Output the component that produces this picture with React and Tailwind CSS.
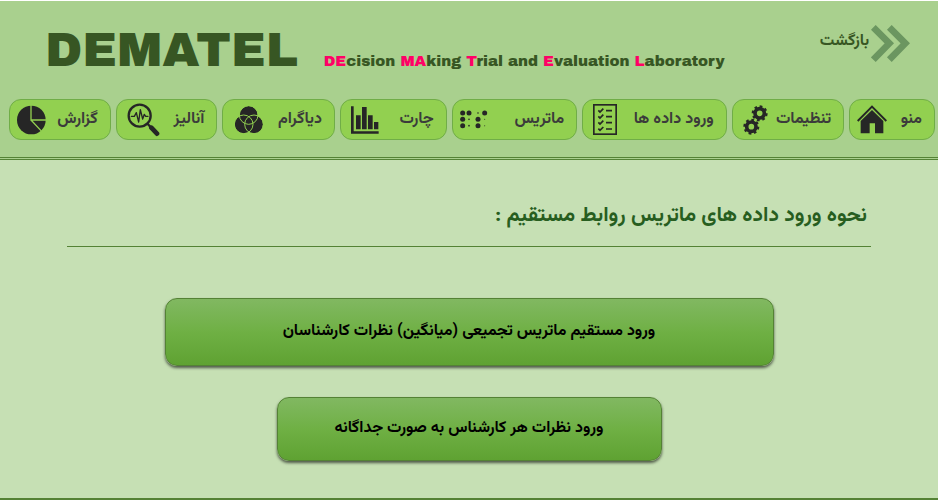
/* eslint-disable react/prop-types */
const HomeIcon = () => (
  <svg viewBox="0 0 90 87" className="w-[30px] h-[29px] shrink-0" fill="#262626">
    <path d="M2 48 L45 5 L88 48" fill="none" stroke="#262626" strokeWidth="6" />
    <path d="M11 48 L45 15 L79 48 V85 H54 V55 H38 V85 H11 Z" />
  </svg>
);

const Gear = ({ x, y }) => (
  <g fill="none" stroke="#262626">
    <circle cx={x} cy={y} r="14" strokeWidth="11" />
    <circle
      cx={x}
      cy={y}
      r="20"
      strokeWidth="8"
      pathLength="16"
      strokeDasharray="1 1"
    />
  </g>
);

const GearsIcon = () => (
  <svg viewBox="0 0 75 90" className="w-[25px] h-[30px] shrink-0">
    <Gear x={50} y={25} />
    <Gear x={25} y={65} />
  </svg>
);

const ListIcon = () => (
  <svg
    viewBox="0 0 72 93"
    className="w-[24px] h-[31px] shrink-0"
    fill="none"
    stroke="#262626"
    strokeWidth="5"
  >
    <rect x="2.5" y="2.5" width="67" height="88" strokeWidth="5" />
    {[20, 38, 56, 75].map((y) => (
      <path
        key={y}
        d={`M16 ${y - 1} l5 5 l10 -10 M39 ${y} h18`}
      />
    ))}
  </svg>
);

const dots = [
  [8, 9, 7.5],
  [27, 9, 7.5],
  [54, 9, 2.5],
  [74, 9, 7.5],
  [8, 28, 7.5],
  [27, 28, 2.5],
  [54, 28, 7.5],
  [74, 28, 1.5],
  [8, 47, 7.5],
  [27, 47, 2.5],
  [54, 47, 7.5],
  [74, 47, 1.5],
];

const MatrixIcon = () => (
  <svg viewBox="0 0 84 57" className="w-[28px] h-[19px] shrink-0" fill="#262626">
    {dots.map(([x, y, r]) => (
      <circle key={`${x}-${y}`} cx={x} cy={y} r={r} />
    ))}
  </svg>
);

const ChartIcon = () => (
  <svg viewBox="0 0 84 84" className="w-[28px] h-[28px] shrink-0" fill="#262626">
    <path d="M0 1 H8 V76 H83 V83 H0 Z" />
    <path d="M15 28 h14 v42 h-14 Z M33 3 h14 v67 h-14 Z M51 28 h14 v42 h-14 Z M69 48 h13 v22 h-13 Z" />
  </svg>
);

const VennIcon = () => (
  <svg viewBox="0 -3 84 87" className="w-[28px] h-[29px] shrink-0">
    <g fill="#262626">
      <circle cx="41" cy="27" r="27" />
      <circle cx="26" cy="55" r="27" />
      <circle cx="57" cy="55" r="27" />
    </g>
    <g fill="none" stroke="#92d050" strokeWidth="3">
      <circle cx="41" cy="27" r="28" />
      <circle cx="26" cy="55" r="28" />
      <circle cx="57" cy="55" r="28" />
    </g>
  </svg>
);

const AnalyzeIcon = () => (
  <svg
    viewBox="0 0 99 102"
    className="w-[33px] h-[34px] shrink-0"
    fill="none"
    stroke="#262626"
    strokeLinecap="round"
    strokeLinejoin="round"
  >
    <circle cx="38" cy="38" r="33" strokeWidth="7" />
    <path
      d="M13 40 H22 L28 29 L35 57 L40 20 L47 48 L52 34 L56 40 H63"
      strokeWidth="4"
    />
    <path d="M62 63 L72 73" strokeWidth="7" />
    <path d="M73 74 L90 92" strokeWidth="14" />
  </svg>
);

const PieIcon = () => (
  <svg viewBox="0 0 87 90" className="w-[29px] h-[30px] shrink-0">
    <circle cx="43" cy="45" r="43" fill="#262626" />
    <path
      d="M42 0 V45 H87 M42 45 L74 79"
      fill="none"
      stroke="#92d050"
      strokeWidth="4"
    />
  </svg>
);

const menu = [
  { name: "منو", Icon: HomeIcon, pad: "pl-[7px]" },
  { name: "تنظیمات", Icon: GearsIcon, pad: "pl-[10px]" },
  { name: "ورود داده ها", Icon: ListIcon, pad: "pl-[10px]" },
  { name: "ماتریس", Icon: MatrixIcon, pad: "pl-[7px]" },
  { name: "چارت", Icon: ChartIcon, pad: "pl-[10px]" },
  { name: "دیاگرام", Icon: VennIcon, pad: "pl-[12px]" },
  { name: "آنالیز", Icon: AnalyzeIcon, pad: "pl-[10px]" },
  { name: "گزارش", Icon: PieIcon, pad: "pl-[7px]" },
];

const Pink = ({ children }) => (
  <span className="text-[#ff0066]">{children}</span>
);

const Header = () => {
  return (
    <header className="bg-[#a9d08e] border-b-3 border-double border-[#548235] pb-[17px]">
      <div className="flex items-start justify-between pt-5 pr-7 pl-[45px]">
        <button className="flex items-center gap-[2px] text-base font-bold text-[#375623]">
          <svg
            viewBox="0 0 117 111"
            className="w-[39px] h-[37px] mt-1"
            fill="none"
            stroke="#6b9660"
            strokeWidth="20"
          >
            <path d="M7 7 L55 55 L7 104 M55 7 L103 55 L55 104" />
          </svg>
          بازگشت
        </button>
        <div
          dir="ltr"
          className="flex items-baseline gap-[26px] font-['Arial_Black','Archivo_Black','Inter',sans-serif] font-normal text-[#375623]"
        >
          <h1 className="text-5xl leading-[58px]">DEMATEL</h1>
          <p className="text-[15px] whitespace-nowrap">
            <Pink>DE</Pink>cision <Pink>MA</Pink>king <Pink>T</Pink>rial and{" "}
            <Pink>E</Pink>valuation <Pink>L</Pink>aboratory
          </p>
        </div>
      </div>
      <nav className="mt-5 mr-[3px] ml-[9px] grid grid-cols-[86fr_113fr_145fr_126fr_107fr_113fr_102fr_102fr] gap-[5px]">
        {menu.map(({ name, Icon, pad }) => (
          <button
            key={name}
            className={`flex h-[41px] min-w-0 items-center justify-between rounded-xl border border-[#70ad47] bg-[#92d050] pr-3 text-base font-bold whitespace-nowrap text-[#3b3b3b] ${pad}`}
          >
            {name}
            <Icon />
          </button>
        ))}
      </nav>
    </header>
  );
};

const Choice = ({ className, children }) => (
  <button
    className={`rounded-xl border border-[#548235] bg-linear-to-b from-[#81b861] via-[#6fb044] to-[#5fa232] text-base font-bold text-black shadow-[0_2px_3px_rgba(0,0,0,0.6)] ${className}`}
  >
    {children}
  </button>
);

const App = () => {
  return (
    <div
      dir="rtl"
      className="flex min-h-screen flex-col bg-white pt-px pr-px font-['Vazirmatn','Noto_Sans_Arabic','DejaVu_Sans_Condensed','DejaVu_Sans',sans-serif]"
    >
      <Header />
      <main className="flex flex-1 flex-col border-b-2 border-[#548235] bg-[#c6e0b4] px-[67px] pt-9">
        <h2 className="border-b border-[#548235] pr-1 pb-[10px] text-[21px] leading-10 font-bold text-[#275e1f]">
          نحوه ورود داده های ماتریس روابط مستقیم :
        </h2>
        <div className="mt-[51px] flex flex-col items-center gap-[31px]">
          <Choice className="h-[68px] w-[609px] max-w-full">
            ورود مستقیم ماتریس تجمیعی (میانگین) نظرات کارشناسان
          </Choice>
          <Choice className="h-[64px] w-[385px] max-w-full">
            ورود نظرات هر کارشناس به صورت جداگانه
          </Choice>
        </div>
      </main>
    </div>
  );
};

export default App;
